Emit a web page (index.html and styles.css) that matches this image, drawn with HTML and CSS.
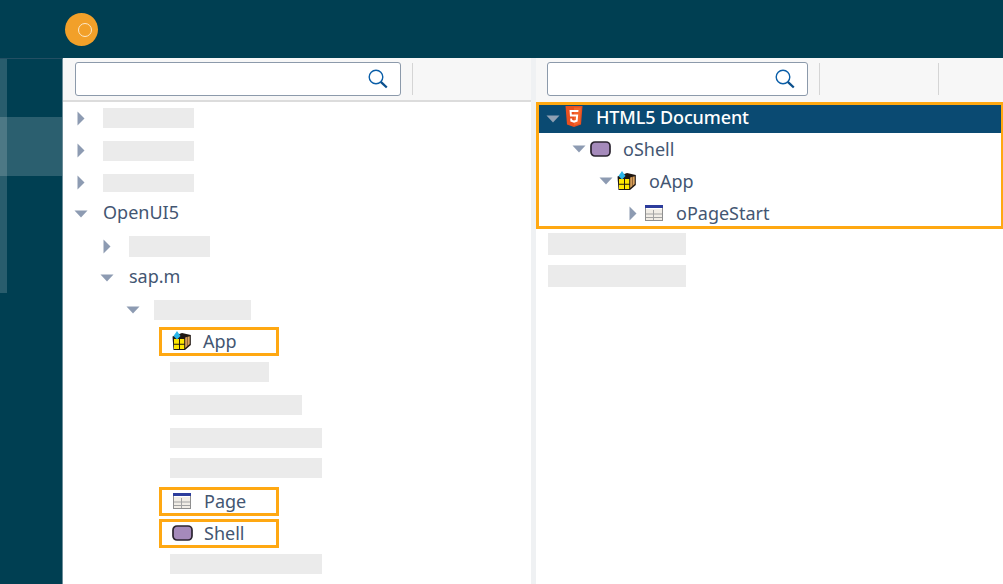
FILE: index.html
```html
<!DOCTYPE html>
<html lang="en">
<head>
<meta charset="utf-8">
<title>OpenUI5 tree</title>
<link rel="stylesheet" href="styles.css">
</head>
<body>
<svg class="defs" width="0" height="0" aria-hidden="true">
  <defs>
    <symbol id="caret-right" viewBox="0 0 8 15"><path d="M0.500 0.500L7.500 7.500L0.500 14.500Z"/></symbol>
    <symbol id="caret-down" viewBox="0 0 14 8"><path d="M0.500 0.500H13.500L7 7.500Z"/></symbol>
    <symbol id="search" viewBox="0 0 20 20">
      <circle cx="8" cy="8" r="6.800" fill="none" stroke="#0a5ea8" stroke-width="1.400"/>
      <path d="M12.800 12.800L18.800 18.500" stroke="#0a4f8c" stroke-width="2.300" fill="none"/>
    </symbol>
    <symbol id="ico-app" viewBox="0 0 20 19">
      <path d="M1.500 5.500L11 2L19.800 4V14L14 19H2.500Z" fill="#1f1712"/>
      <path d="M14.200 6.500L18.700 5.200V13L14.200 17Z" fill="#dca35c"/>
      <path d="M16.400 6V15" stroke="#6a4524" stroke-width="0.700"/>
      <path d="M3 8H8V12.700H3ZM9 8H13.200V12.700H9ZM3 13.700H8V18H3ZM9 13.700H13.200V18H9Z" fill="#ffe600"/>
      <path d="M6 0L9.500 5L6 8.500L2.500 5Z" fill="#2bb5e8"/>
    </symbol>
    <symbol id="ico-page" viewBox="0 0 18 16">
      <rect x="0.500" y="0.500" width="17" height="15" fill="#f1ede6" stroke="#8f8f8f"/>
      <rect x="0" y="0" width="18" height="3" fill="#2c3c9c"/>
      <path d="M1 3.500H17" stroke="#fff" stroke-width="1"/>
      <path d="M1 9H17M1 12.500H17M8.500 5V15" stroke="#a3a3a3" stroke-width="1" fill="none"/>
    </symbol>
    <symbol id="ico-shell" viewBox="0 0 21 16">
      <rect x="1" y="1" width="19" height="14" rx="4" fill="#a58abb" stroke="#2b2430" stroke-width="1.700"/>
    </symbol>
    <symbol id="ico-html" viewBox="0 0 18 21">
      <path d="M0.500 0H17.500L16 18.500L9 21L2 18.500Z" fill="#e9501f"/>
      <path d="M9 1.500H16L14.800 17.500L9 19.500Z" fill="#f3642b"/>
      <path d="M13.500 4H4.500L5 10.500H11L10.800 14L9 14.600L7.200 14L7.100 12.500H5.200L5.400 15.600L9 16.800L12.600 15.600L13.200 8.500H6.800L6.600 6H13.300Z" fill="#fff"/>
    </symbol>
  </defs>
</svg>

<header class="shell-bar">
  <div class="avatar"><span class="avatar-ring"></span></div>
</header>

<div class="workspace">
  <nav class="side-nav">
    <div class="side-strip"></div>
    <div class="side-item"></div>
  </nav>

  <section class="pane pane-left">
    <div class="toolbar">
      <div class="search search-left"><svg class="search-ico"><use href="#search"/></svg></div>
      <span class="tb-divider"></span>
    </div>
    <div class="tree">
      <div class="row lv0"><svg class="caret-r"><use href="#caret-right"/></svg><span class="ph w91"></span></div>
      <div class="row lv0"><svg class="caret-r"><use href="#caret-right"/></svg><span class="ph w91 down"></span></div>
      <div class="row lv0"><svg class="caret-r"><use href="#caret-right"/></svg><span class="ph w91 short down"></span></div>
      <div class="row lv0"><svg class="caret-d"><use href="#caret-down"/></svg><span class="label lift">OpenUI5</span></div>
      <div class="row lv1"><svg class="caret-r"><use href="#caret-right"/></svg><span class="ph w81 h21"></span></div>
      <div class="row lv1"><svg class="caret-d"><use href="#caret-down"/></svg><span class="label lift">sap.m</span></div>
      <div class="row lv2"><svg class="caret-d"><use href="#caret-down"/></svg><span class="ph w97"></span></div>
      <div class="row leaf"><div class="mark"><svg class="ico ico-app"><use href="#ico-app"/></svg><span class="label">App</span></div></div>
      <div class="row leaf-ph"><span class="ph w99 up2"></span></div>
      <div class="row leaf-ph"><span class="ph w132 up1"></span></div>
      <div class="row leaf-ph"><span class="ph w152"></span></div>
      <div class="row leaf-ph"><span class="ph w152 up2"></span></div>
      <div class="row leaf"><div class="mark"><svg class="ico ico-page"><use href="#ico-page"/></svg><span class="label">Page</span></div></div>
      <div class="row leaf"><div class="mark"><svg class="ico ico-shell"><use href="#ico-shell"/></svg><span class="label">Shell</span></div></div>
      <div class="row leaf-ph"><span class="ph w152 up2"></span></div>
    </div>
  </section>

  <div class="splitter"></div>

  <section class="pane pane-right">
    <div class="toolbar">
      <div class="search search-right"><svg class="search-ico"><use href="#search"/></svg></div>
      <span class="tb-divider"></span>
      <span class="tb-divider second"></span>
    </div>
    <div class="selection">
      <div class="row selected"><svg class="caret-d"><use href="#caret-down"/></svg><svg class="ico ico-html"><use href="#ico-html"/></svg><span class="label strong lift">HTML5 Document</span></div>
      <div class="row r1"><svg class="caret-d"><use href="#caret-down"/></svg><svg class="ico ico-shell"><use href="#ico-shell"/></svg><span class="label">oShell</span></div>
      <div class="row r2"><svg class="caret-d"><use href="#caret-down"/></svg><svg class="ico ico-app"><use href="#ico-app"/></svg><span class="label">oApp</span></div>
      <div class="row r3"><svg class="caret-r"><use href="#caret-right"/></svg><svg class="ico ico-page"><use href="#ico-page"/></svg><span class="label">oPageStart</span></div>
    </div>
    <div class="rest">
      <span class="ph w138 tall"></span>
      <span class="ph w138 tall"></span>
    </div>
  </section>
</div>
</body>
</html>
```
FILE: styles.css
```css
* { box-sizing: border-box; }
html, body { margin: 0; padding: 0; }
body {
  width: 1003px;
  height: 584px;
  overflow: hidden;
  background: #fff;
  font-family: "Noto Sans", "Open Sans", sans-serif;
  font-size: 18px;
  color: #435672;
}
.defs { position: absolute; }

.shell-bar {
  height: 58px;
  background: #003f52;
  padding: 13px 0 0 65px;
}
.avatar {
  width: 33px;
  height: 33px;
  border-radius: 50%;
  background: #f2a029;
  display: flex;
  align-items: center;
  justify-content: center;
}
.avatar-ring {
  width: 14px;
  height: 14px;
  margin-left: 6px;
  border-radius: 50%;
  border: 1.5px solid #fde8c8;
}

.workspace {
  display: flex;
  height: 526px;
}
.side-nav {
  width: 63px;
  flex: none;
  background: #003f52;
  border-top: 1px solid #234f63;
  border-right: 1px solid #6c8d99;
  position: relative;
}
.side-strip {
  position: absolute;
  left: 0;
  top: 0;
  width: 7px;
  height: 234px;
  background: rgba(255, 255, 255, 0.16);
}
.side-item {
  position: absolute;
  left: 0;
  right: 0;
  top: 58px;
  height: 59px;
  background: rgba(255, 255, 255, 0.17);
}

.pane { display: flex; flex-direction: column; }
.pane-left { width: 468px; flex: none; }
.pane-right { flex: 1; min-width: 0; }
.splitter { width: 5px; flex: none; background: #eff1f3; }

.toolbar {
  height: 44px;
  flex: none;
  display: flex;
  align-items: flex-start;
  background: #f7f7f7;
  border-bottom: 2px solid #dcdcdc;
  padding: 4px 0 0 12px;
}
.pane-right .toolbar { border-bottom: 0; padding-left: 11px; }
.search {
  height: 34px;
  background: #fff;
  border: 1.5px solid #8c9aab;
  border-radius: 3px;
  display: flex;
  align-items: center;
  justify-content: flex-end;
  padding-right: 12px;
}
.search-left { width: 326px; }
.search-right { width: 261px; }
.search-ico { width: 20px; height: 20px; }
.tb-divider {
  width: 1px;
  height: 32px;
  margin: 1px 0 0 11px;
  background: #d5d5d5;
}
.tb-divider.second { margin-left: 118px; }

.row {
  height: 32px;
  display: flex;
  align-items: center;
  white-space: nowrap;
}
.caret-r { width: 8px; height: 15px; flex: none; fill: #8d9bb2; }
.caret-d { width: 14px; height: 8px; flex: none; fill: #8d9bb2; }
.label { line-height: 24px; }
.lift { padding-bottom: 4px; }
.ph { display: block; height: 20px; background: #ebebeb; }
.ph.short { height: 18px; }
.ph.h21 { height: 21px; }
.ph.tall { height: 22px; }
.ph.down { margin-top: 2px; }
.ph.up1 { margin-top: -2px; }
.ph.up2 { margin-top: -4px; }
.w81 { width: 81px; }
.w91 { width: 91px; }
.w97 { width: 97px; }
.w99 { width: 99px; }
.w132 { width: 132px; }
.w138 { width: 138px; }
.w152 { width: 152px; }

.tree .row.lv0 { padding-left: 14px; }
.tree .row.lv1 { padding-left: 40px; }
.tree .row.lv2 { padding-left: 66px; }
.tree .caret-r { margin-right: 18px; }
.tree .caret-d { margin-left: -3px; margin-right: 15px; }
.tree .lv2 .caret-d { margin-right: 14px; }

.leaf { padding-left: 96px; }
.leaf-ph { padding-left: 107px; }
.mark {
  width: 120px;
  height: 29px;
  margin-top: -1px;
  border: 3px solid #ffa812;
  display: flex;
  align-items: center;
  padding-left: 10px;
}
.ico { flex: none; }
.ico-app { width: 20px; height: 19px; }
.ico-page { width: 18px; height: 16px; }
.ico-shell { width: 21px; height: 16px; }
.ico-html { width: 18px; height: 21px; }
.mark .label { margin-left: 12px; padding-bottom: 2px; }
.mark .ico-app { margin: -2px 0 0 -1px; }
.mark .ico-page { margin-left: 1px; margin-right: 1px; margin-top: -1px; }
.mark .ico-shell { margin-top: -1px; }
.mark .ico-shell + .label { margin-left: 11px; }

.selection {
  height: 127px;
  flex: none;
  border: 3px solid #ffa812;
  border-right-width: 2px;
}
.selection .row.selected {
  height: 28px;
  background: #0a4a72;
  color: #fff;
  padding-left: 7px;
}
.selected .caret-d { fill: #8fa0b3; }
.selected .ico-html { margin: -6px 0 0 5px; }
.selected .label { margin-left: 13px; letter-spacing: -0.12px; }
.strong { font-weight: 500; }
.r1 { padding-left: 33px; }
.r2 { padding-left: 60px; }
.r3 { padding-left: 90px; }
.r1 .ico-shell { margin-left: 4px; }
.r1 .label { margin-left: 12px; }
.r2 .ico-app { margin: -2px 0 0 3px; }
.r2 .label { margin-left: 13px; }
.r3 .ico-page { margin-left: 8px; }
.r3 .label { margin-left: 13px; }

.rest {
  padding: 4px 0 0 12px;
  display: flex;
  flex-direction: column;
  gap: 10px;
}
```
